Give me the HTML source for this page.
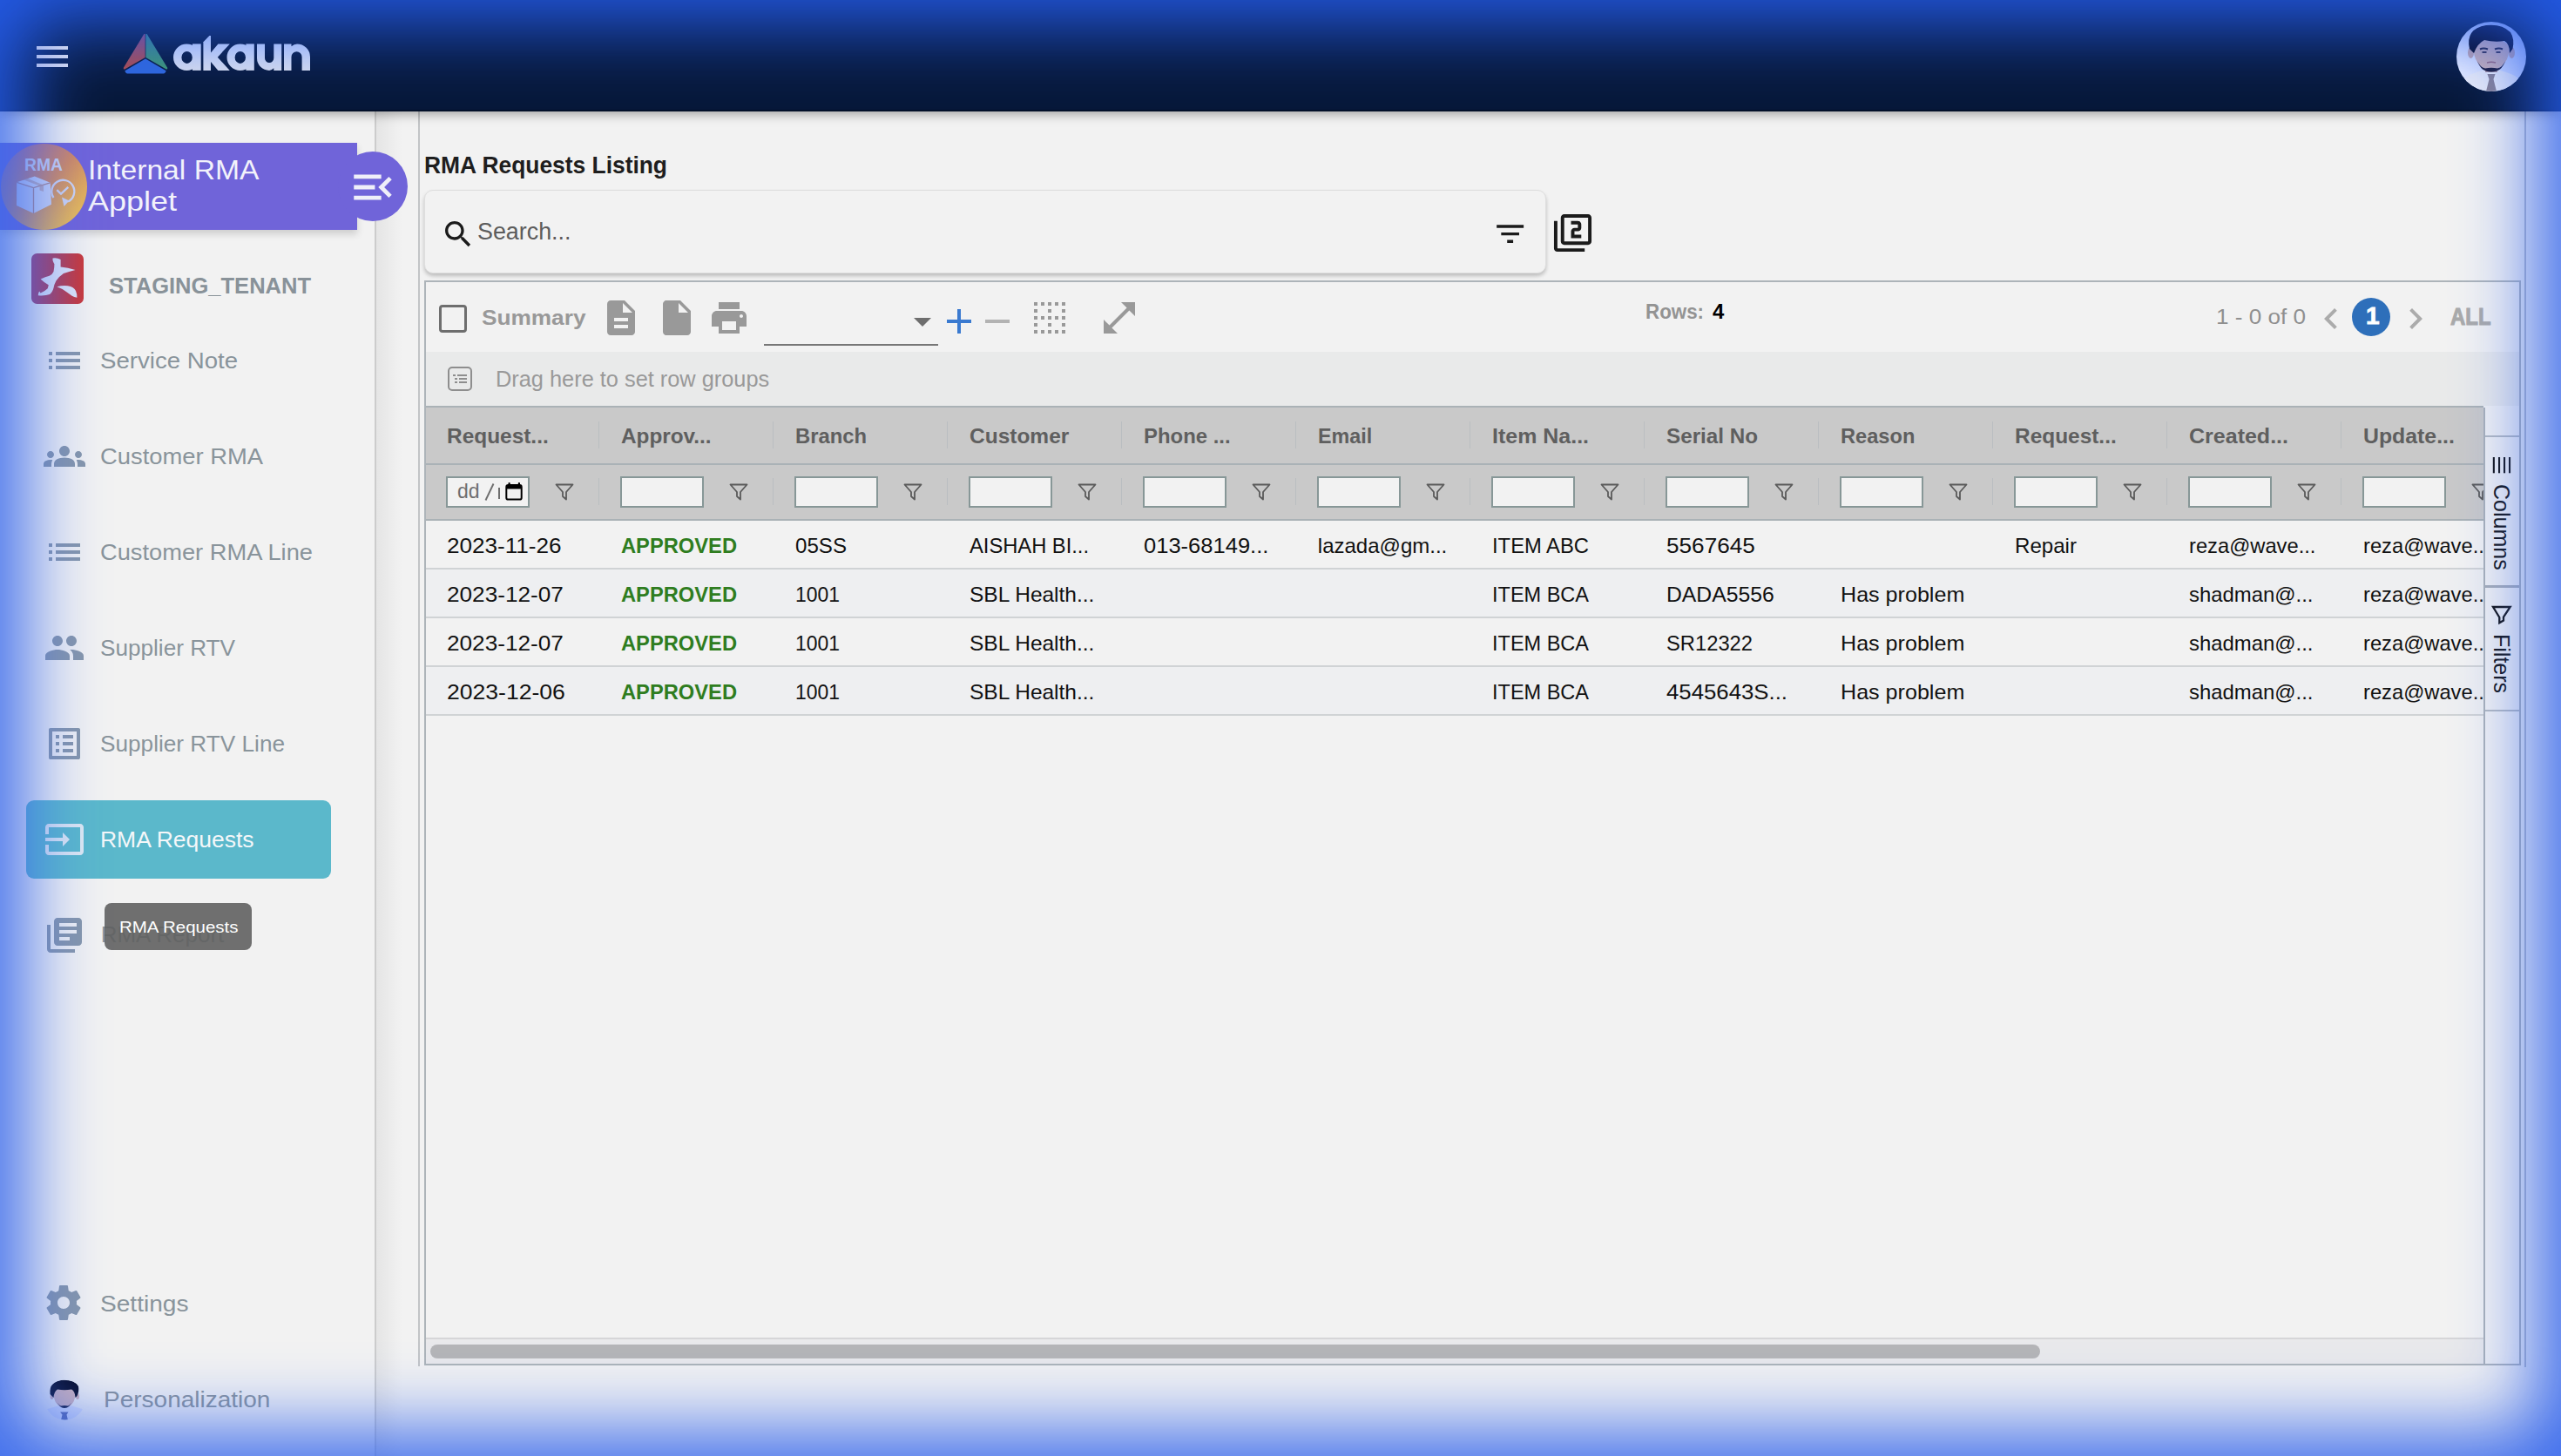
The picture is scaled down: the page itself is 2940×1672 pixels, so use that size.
<!DOCTYPE html>
<html><head><meta charset="utf-8"><title>RMA Requests</title>
<style>
html,body{margin:0;padding:0;width:2940px;height:1672px;overflow:hidden;background:#f2f2f2;font-family:"Liberation Sans",sans-serif;}
.t{position:absolute;line-height:1;white-space:nowrap;}
.ic{position:absolute;display:block;overflow:visible;}
.b{position:absolute;box-sizing:border-box;}
</style></head><body>
<div class="b" style="left:0;top:128px;width:432px;height:1544px;background:#f2f2f2;border-right:2px solid #cccccc"></div>
<div class="b" style="left:432px;top:128px;width:30px;height:1544px;background:linear-gradient(90deg,rgba(0,0,0,.055),rgba(0,0,0,0))"></div>
<div class="b" style="left:480.3px;top:128px;width:1.7px;height:1441px;background:#c2c4c6"></div>
<div class="b" style="left:2898px;top:128px;width:1.6px;height:1442px;background:#b4bac6"></div>
<div class="b" style="left:0;top:0;width:2940px;height:128px;background:#071839;box-shadow:0 3px 12px rgba(0,0,0,.35);border-bottom:2px solid #04112a;z-index:2"></div>
<div class="b" style="left:42px;top:53px;width:36px;height:4px;background:linear-gradient(90deg,#a9b9ef,#c9d2f1);z-index:60"></div><div class="b" style="left:42px;top:63px;width:36px;height:4px;background:linear-gradient(90deg,#a9b9ef,#c9d2f1);z-index:60"></div><div class="b" style="left:42px;top:73px;width:36px;height:4px;background:linear-gradient(90deg,#a9b9ef,#c9d2f1);z-index:60"></div><div style="position:absolute;left:0;top:0;z-index:3"><svg class="ic" style="left:136px;top:32px;width:230px;height:60px" viewBox="136 32 230 60">
<defs>
<linearGradient id="lr" x1="0" y1="0" x2="0" y2="1"><stop offset="0" stop-color="#934e78"/><stop offset="1" stop-color="#b24c47"/></linearGradient>
<linearGradient id="lg" x1="0" y1="0" x2="0" y2="1"><stop offset="0" stop-color="#3a8590"/><stop offset="1" stop-color="#40996e"/></linearGradient>
<linearGradient id="lt" x1="0" y1="0" x2="0" y2="1"><stop offset="0" stop-color="#d4e0ff"/><stop offset="1" stop-color="#dde1ee"/></linearGradient>
</defs>
<path d="M165.2 39.2 Q166.2 38.4 166.6 39.2 L166.6 66.0 L143.2 79.6 Q141.2 79.6 142.0 77.4 Z" fill="url(#lr)"/>
<path d="M168.8 39.2 Q167.8 38.4 167.4 39.2 L167.4 66.0 L190.8 79.6 Q192.8 79.6 192.0 77.4 Z" fill="url(#lg)"/>
<path d="M167 67.6 L190.6 81.2 Q190 84.6 186.6 84.6 L147.4 84.6 Q144 84.6 143.4 81.2 Z" fill="#3068dc"/>
<g fill="url(#lt)">
<path fill-rule="evenodd" d="M199 65.7a15.3 15.3 0 1 0 30.6 0a15.3 15.3 0 1 0 -30.6 0Z M208.4 65.9a6.2 7 0 1 0 12.4 0a6.2 7 0 1 0 -12.4 0Z"/>
<rect x="221" y="50.4" width="9.7" height="30.5"/>
<path d="M233.4 48.2 L240.4 41 L242 41 L242 80.9 L233.4 80.9 Z"/>
<path d="M242 60.5 L250.4 50.4 L263.8 50.4 L249.8 65.7 L263.8 80.9 L250.4 80.9 L242 71 Z"/>
<path fill-rule="evenodd" d="M260.5 65.7a15.3 15.3 0 1 0 30.6 0a15.3 15.3 0 1 0 -30.6 0Z M269.6 65.9a6.2 7 0 1 0 12.4 0a6.2 7 0 1 0 -12.4 0Z"/>
<rect x="282.4" y="50.4" width="9.4" height="30.5"/>
<path d="M295 50.4 H304 V66.8 A5.15 5.15 0 0 0 314.3 66.8 V50.4 H323.2 V80.9 H314.3 V78.2 Q311.5 80.9 309.1 80.9 A14.1 14.1 0 0 1 295 66.8 Z"/>
<path d="M326 80.9 V50.4 H334.5 V53.2 Q337.5 50.4 341 50.4 A15 15 0 0 1 356 65.4 V80.9 H346.6 V65.4 A6.05 6.05 0 0 0 334.5 65.4 V80.9 Z"/>
</g>
</svg><svg class="ic" style="left:2820px;top:25px;width:80px;height:80px" viewBox="0 0 80 80">
<defs><clipPath id="av"><circle cx="40" cy="40" r="40"/></clipPath>
<linearGradient id="avbg" x1="1" y1="0" x2="0" y2="1"><stop offset="0" stop-color="#b4c6ff"/><stop offset="1" stop-color="#f4f6ff"/></linearGradient>
<linearGradient id="avsk" x1="0" y1="0" x2="0" y2="1"><stop offset="0" stop-color="#c8aeb6"/><stop offset="1" stop-color="#d0b4b4"/></linearGradient></defs>
<g clip-path="url(#av)">
<rect width="80" height="80" fill="url(#avbg)"/>
<path d="M2 80 Q4 64 20 59 L32 55 L48 55 L60 59 Q76 64 78 80 Z" fill="#eceef8"/>
<path d="M33 56 L40 64 L47 56 L46 55 L34 55 Z" fill="#f6f6fc"/>
<path d="M35.5 60 L44.5 60 L42.5 66 L46 80 L34 80 L37.5 66 Z" fill="#8c8494"/>
<ellipse cx="16.5" cy="35.5" rx="3.5" ry="6.5" fill="#c2a6ae"/>
<ellipse cx="63.5" cy="35.5" rx="3.5" ry="6.5" fill="#c2a6ae"/>
<rect x="33" y="48" width="14" height="10" fill="#b89ea4"/>
<path d="M19.5 28 Q19 52 40 56 Q61 52 60.5 28 Q56 20 40 20 Q24 20 19.5 28 Z" fill="url(#avsk)"/>
<path d="M15 31 Q10 8 34 4 Q52 2 62 12 Q67 20 64.5 31 L61 36 Q61 25 55 22 Q44 24 32 21 Q24 25 20 36 Z" fill="#05071a"/>
<path d="M24 45 Q28 57.5 40 57.5 Q52 57.5 56 45 Q53 52 47 53.5 Q40 52 33 53.5 Q27 52 24 45 Z" fill="#1b1830"/>
<path d="M27 31.5 Q31 29.5 36 31.5 M44 31.5 Q49 29.5 53 31.5" stroke="#24203a" stroke-width="2" fill="none"/>
<path d="M29.5 35 h5 M45.5 35 h5" stroke="#3a3450" stroke-width="1.8"/>
<path d="M35 47 Q40 45.5 45 47" stroke="#9a6a7a" stroke-width="1.4" fill="none"/>
</g></svg></div>
<div class="b" style="left:0;top:164px;width:410px;height:100px;background:#7064d9;box-shadow:0 5px 8px rgba(0,0,0,.15)"></div>
<div class="b" style="left:388px;top:174px;width:80px;height:80px;border-radius:50%;background:#7064d9"></div>
<svg class="ic" style="left:399.00px;top:186.00px;width:58px;height:58px;" viewBox="0 0 24 24"><path fill="#efeff9" d="M3 18h13v-2H3v2zm0-5h10v-2H3v2zm0-7v2h13V6H3zm18 9.59L17.42 12 21 8.41 19.59 7l-5 5 5 5L21 15.59z"/></svg>
<svg class="ic" style="left:1px;top:165px;width:99px;height:99px" viewBox="0 0 99 99">
<defs><linearGradient id="rg" x1="0" y1="0.15" x2="0.85" y2="1"><stop offset="0" stop-color="#a86c9c"/><stop offset=".5" stop-color="#d28a62"/><stop offset="1" stop-color="#eec454"/></linearGradient></defs>
<circle cx="49.5" cy="49.5" r="49.5" fill="url(#rg)"/>
<text x="49" y="31.2" font-family="Liberation Sans" font-weight="bold" font-size="19.5" fill="#cfd6f4" text-anchor="middle" textLength="44" lengthAdjust="spacingAndGlyphs">RMA</text>
<path d="M18.2 44.3 L38.8 37.6 L56.7 44.8 L37.5 50.5 Z" fill="#d3dbf6"/>
<path d="M18.2 44.3 L37.5 50.5 L37.5 80 L18 71 Z" fill="#c7d1f3"/>
<path d="M37.5 50.5 L56.7 44.8 L58 69.7 L37.5 80 Z" fill="#d0d8f5"/>
<path d="M18.2 44.3 L37.5 50.5 L56.7 44.8 M37.5 50.5 V80" stroke="#b08a8e" stroke-width="1.3" fill="none"/>
<path d="M30 39.8 L49 47.4 L49 55 L44.5 53.5 L44.5 48.6 L25.6 41.2 Z" fill="#b89494" opacity=".6"/>
<path d="M60.5 62 A13 13 0 1 1 77 66.5" stroke="#cfd6f4" stroke-width="2.3" fill="none"/>
<path d="M70 61.5 L78.5 65.5 L72.5 72 Z" fill="#cfd6f4"/>
<path d="M64.3 53.2 L69 57.6 L77.3 49.8" stroke="#cfd6f4" stroke-width="2.4" fill="none"/>
</svg>
<div class="t" style="left:101.40px;top:180.18px;font-size:31.8px;color:#f2f2fb;transform:scale(1.0590,1.0000);transform-origin:0 0;">Internal RMA</div>
<div class="t" style="left:101.40px;top:215.98px;font-size:31.8px;color:#f2f2fb;transform:scale(1.1314,1.0000);transform-origin:0 0;">Applet</div>
<svg class="ic" style="left:36px;top:291px;width:60px;height:58px" viewBox="0 0 60 58">
<defs><linearGradient id="tg" x1="0" y1="0" x2="1" y2="0"><stop offset="0" stop-color="#a04070"/><stop offset=".45" stop-color="#ac3e5a"/><stop offset="1" stop-color="#cc3838"/></linearGradient></defs>
<rect width="60" height="58" rx="6.5" fill="url(#tg)"/>
<path d="M24.5 5.5 Q29 4.5 33.6 7 L33.6 15.5 Q42 16 50.5 19 Q43 21 37 23 Q31 27 28.4 31.5 Q26 36 25.5 39.7 Q24 45 21 47 Q16 49 7.7 48.3 Q8 45 9.1 43.5 L10.6 45.4 Q16 43 18.7 40.2 Q19.5 38 19.7 36.3 Q14 33 10.6 29.6 Q16 26.5 20.7 25.7 Q24.5 23.5 25.5 20.9 Q26.5 16 26.4 12.3 Q25 10 24.5 8 Z" fill="#dfe5f8"/>
<path d="M29.3 38.2 Q36 36.5 41.8 37.3 Q49 38.5 51 43 Q53 48 52.4 50.7 Q49 50.5 46.6 48.8 Q40 44 35.6 41.1 Q32 39 29.3 38.2 Z" fill="#dfe5f8"/>
</svg>
<div class="t" style="left:125.00px;top:315.09px;font-size:26px;color:#899299;font-weight:bold;transform:scale(0.9813,1.0000);transform-origin:0 0;">STAGING_TENANT</div>
<svg class="ic" style="left:50.00px;top:389.90px;width:48px;height:48px;" viewBox="0 0 24 24"><path fill="#8797aa" d="M3 13h2v-2H3v2zm0 4h2v-2H3v2zm0-8h2V7H3v2zm4 4h14v-2H7v2zm0 4h14v-2H7v2zM7 7v2h14V7H7z"/></svg>
<div class="t" style="left:115.10px;top:400.89px;font-size:26px;color:#89949b;transform:scale(1.0615,1.0000);transform-origin:0 0;">Service Note</div>
<svg class="ic" style="left:50.00px;top:500.40px;width:48px;height:48px;" viewBox="0 0 24 24"><path fill="#8797aa" d="M12 12.75c1.63 0 3.07.39 4.24.9 1.08.48 1.76 1.56 1.76 2.73V18H6v-1.61c0-1.18.68-2.26 1.76-2.73 1.17-.52 2.61-.91 4.24-.91zM4 13c1.1 0 2-.9 2-2s-.9-2-2-2-2 .9-2 2 .9 2 2 2zm1.13 1.1c-.37-.06-.74-.1-1.13-.1-.99 0-1.93.21-2.78.58C.48 14.9 0 15.62 0 16.43V18h4.5v-1.61c0-.83.23-1.61.63-2.29zM20 13c1.1 0 2-.9 2-2s-.9-2-2-2-2 .9-2 2 .9 2 2 2zm4 3.43c0-.81-.48-1.53-1.22-1.85-.85-.37-1.79-.58-2.78-.58-.39 0-.76.04-1.13.1.4.68.63 1.46.63 2.29V18H24v-1.57zM12 6c1.66 0 3 1.34 3 3s-1.34 3-3 3-3-1.34-3-3 1.34-3 3-3z"/></svg>
<div class="t" style="left:115.10px;top:511.39px;font-size:26px;color:#89949b;transform:scale(1.0523,1.0000);transform-origin:0 0;">Customer RMA</div>
<svg class="ic" style="left:50.00px;top:610.40px;width:48px;height:48px;" viewBox="0 0 24 24"><path fill="#8797aa" d="M3 13h2v-2H3v2zm0 4h2v-2H3v2zm0-8h2V7H3v2zm4 4h14v-2H7v2zm0 4h14v-2H7v2zM7 7v2h14V7H7z"/></svg>
<div class="t" style="left:115.10px;top:621.39px;font-size:26px;color:#89949b;transform:scale(1.0488,1.0000);transform-origin:0 0;">Customer RMA Line</div>
<svg class="ic" style="left:50.00px;top:720.20px;width:48px;height:48px;" viewBox="0 0 24 24"><path fill="#8797aa" d="M16 11c1.66 0 2.99-1.34 2.99-3S17.66 5 16 5c-1.66 0-3 1.34-3 3s1.34 3 3 3zm-8 0c1.66 0 2.99-1.34 2.99-3S9.66 5 8 5C6.34 5 5 6.34 5 8s1.34 3 3 3zm0 2c-2.33 0-7 1.17-7 3.5V19h14v-2.5c0-2.33-4.67-3.5-7-3.5zm8 0c-.29 0-.62.02-.97.05 1.16.84 1.97 1.97 1.97 3.45V19h6v-2.5c0-2.33-4.67-3.5-7-3.5z"/></svg>
<div class="t" style="left:115.10px;top:731.19px;font-size:26px;color:#89949b;transform:scale(1.0055,1.0000);transform-origin:0 0;">Supplier RTV</div>
<svg class="ic" style="left:50.00px;top:830.20px;width:48px;height:48px;" viewBox="0 0 24 24"><path fill="#8797aa" d="M19 5v14H5V5h14m1.1-2H3.9c-.5 0-.9.4-.9.9v16.2c0 .4.4.9.9.9h16.2c.4 0 .9-.5.9-.9V3.9c0-.5-.5-.9-.9-.9zM11 7h6v2h-6V7zm0 4h6v2h-6v-2zm0 4h6v2h-6zM7 7h2v2H7zm0 4h2v2H7zm0 4h2v2H7z"/></svg>
<div class="t" style="left:115.10px;top:841.19px;font-size:26px;color:#89949b;transform:scale(1.0070,1.0000);transform-origin:0 0;">Supplier RTV Line</div>
<div class="b" style="left:30px;top:919px;width:350px;height:90px;border-radius:9px;background:#5bb8cb"></div>
<svg class="ic" style="left:50.00px;top:940.00px;width:48px;height:48px;" viewBox="0 0 24 24"><path fill="#dfe9f2" d="M21 3.01H3c-1.1 0-2 .9-2 2V9h2V4.99h18v14.03H3V15H1v4.01c0 1.1.9 1.98 2 1.98h18c1.1 0 2-.88 2-1.98v-14c0-1.11-.9-2-2-2zM11 16l4-4-4-4v3H1v2h10v3z"/></svg>
<div class="t" style="left:115.00px;top:951.49px;font-size:26px;color:#f4f7f9;transform:scale(1.0185,1.0000);transform-origin:0 0;">RMA Requests</div>
<svg class="ic" style="left:50.00px;top:1050.00px;width:48px;height:48px;" viewBox="0 0 24 24"><path fill="#8797aa" d="M4 6H2v14c0 1.1.9 2 2 2h14v-2H4V6zm16-4H8c-1.1 0-2 .9-2 2v12c0 1.1.9 2 2 2h12c1.1 0 2-.9 2-2V4c0-1.1-.9-2-2-2zm-1 9H9V9h10v2zm-4 4H9v-2h6v2zm4-8H9V5h10v2z"/></svg>
<div class="t" style="left:115.70px;top:1060.49px;font-size:26px;color:#89949b;">RMA Report</div>
<div class="b" style="left:120px;top:1037px;width:169px;height:54px;border-radius:8px;background:rgba(97,97,97,.9)"></div>
<div class="t" style="left:136.50px;top:1054.75px;font-size:19.2px;color:#ffffff;transform:scale(1.0660,1.0000);transform-origin:0 0;">RMA Requests</div>
<svg class="ic" style="left:49.00px;top:1472.00px;width:48px;height:48px;" viewBox="0 0 24 24"><path fill="#8797aa" d="M19.43 12.98c.04-.32.07-.64.07-.98s-.03-.66-.07-.98l2.11-1.65c.19-.15.24-.42.12-.64l-2-3.46c-.12-.22-.39-.3-.61-.22l-2.49 1c-.52-.4-1.08-.73-1.69-.98l-.38-2.65C14.46 2.18 14.25 2 14 2h-4c-.25 0-.46.18-.49.42l-.38 2.65c-.61.25-1.17.59-1.69.98l-2.49-1c-.23-.09-.49 0-.61.22l-2 3.46c-.13.22-.07.49.12.64l2.11 1.65c-.04.32-.07.65-.07.98s.03.66.07.98l-2.11 1.65c-.19.15-.24.42-.12.64l2 3.46c.12.22.39.3.61.22l2.49-1c.52.4 1.08.73 1.69.98l.38 2.65c.03.24.24.42.49.42h4c.25 0 .46-.18.49-.42l.38-2.65c.61-.25 1.17-.59 1.69-.98l2.49 1c.23.09.49 0 .61-.22l2-3.46c.12-.22.07-.49-.12-.64l-2.11-1.65zM12 15.5c-1.93 0-3.5-1.57-3.5-3.5s1.57-3.5 3.5-3.5 3.5 1.57 3.5 3.5-1.57 3.5-3.5 3.5z"/></svg>
<div class="t" style="left:114.60px;top:1483.57px;font-size:26.5px;color:#89949b;transform:scale(1.0591,1.0000);transform-origin:0 0;">Settings</div>
<svg class="ic" style="left:53px;top:1584px;width:43px;height:47px" viewBox="0 0 43 47">
<defs><clipPath id="pa"><circle cx="21.5" cy="23.5" r="23"/></clipPath></defs>
<g clip-path="url(#pa)">
<path d="M0 34.5 L13 30.5 L30 30.5 L43 34.5 L43 47 L0 47 Z" fill="#dde2f8"/>
<path d="M16 37.5 L25.5 37.5 L23.5 40.5 L25 47 L17 47 L18.5 40.5 Z" fill="#5a68a8"/>
<ellipse cx="6.5" cy="19.5" rx="2" ry="3.5" fill="#d0b2b6"/>
<ellipse cx="36" cy="19.5" rx="2" ry="3.5" fill="#d0b2b6"/>
<path d="M8.5 15 Q8.5 31 21 32.5 Q33.5 31 33.5 15 Q31 10 21 10 Q11 10 8.5 15 Z" fill="#d6b6b8"/>
<path d="M4.5 17 Q3 2 19 0.8 Q33 0.5 37 8 Q38 14 35.5 19 L33.5 21 Q33 13 29 11.5 Q21 13 13 11.5 Q9 14 8.5 21 Z" fill="#03061c"/>
<path d="M12 24.5 Q15 33 21 33 Q27 33 30 24.5 Q28 29.5 25 30.5 Q21 29.5 17 30.5 Q14 29.5 12 24.5 Z" fill="#0a1030"/>
</g></svg>
<div class="t" style="left:118.60px;top:1593.57px;font-size:26.5px;color:#89949b;transform:scale(1.0564,1.0000);transform-origin:0 0;">Personalization</div>
<div class="t" style="left:487.20px;top:176.54px;font-size:27px;color:#1e1e1e;font-weight:bold;transform:scale(0.9771,1.0000);transform-origin:0 0;">RMA Requests Listing</div>
<div class="b" style="left:487px;top:218px;width:1288px;height:96px;border-radius:10px;background:#f2f2f2;border:1px solid #dedede;box-shadow:0 3px 4px rgba(0,0,0,.22)"></div>
<svg class="ic" style="left:505.60px;top:249.00px;width:40px;height:40px;" viewBox="0 0 24 24"><path fill="#1b1b1b" d="M15.5 14h-.79l-.28-.27C15.41 12.59 16 11.11 16 9.5 16 5.91 13.09 3 9.5 3S3 5.91 3 9.5 5.91 16 9.5 16c1.61 0 3.09-.59 4.23-1.57l.27.28v.79l5 4.99L20.49 19l-4.99-5zm-6 0C7.01 14 5 11.99 5 9.5S7.01 5 9.5 5 14 7.01 14 9.5 11.99 14 9.5 14z"/></svg>
<div class="t" style="left:547.50px;top:253.39px;font-size:27px;color:#5c5c5c;transform:scale(0.9949,1.0000);transform-origin:0 0;">Search...</div>
<svg class="ic" style="left:1712.80px;top:247.70px;width:41.3px;height:41.3px;" viewBox="0 0 24 24"><path fill="#1b1b1b" d="M10 18h4v-2h-4v2zM3 6v2h18V6H3zm3 7h12v-2H6v2z"/></svg>
<svg class="ic" style="left:1782.00px;top:244.00px;width:47px;height:47px;" viewBox="0 0 24 24"><path fill="#1b1b1b" d="M3 5H1v16c0 1.1.9 2 2 2h16v-2H3V5zm18-4H7c-1.1 0-2 .9-2 2v14c0 1.1.9 2 2 2h14c1.1 0 2-.9 2-2V3c0-1.1-.9-2-2-2zm0 16H7V3h14v14zm-4-4h-4v-2h2c1.1 0 2-.89 2-2V7c0-1.11-.9-2-2-2h-4v2h4v2h-2c-1.1 0-2 .89-2 2v4h6v-2z"/></svg>
<div class="b" style="left:487px;top:322px;width:2407px;height:1246px;border:2px solid #adb4b9;background:#f2f2f2"></div>
<div class="b" style="left:504px;top:350px;width:32px;height:32px;border:3.2px solid #6e6e6e;border-radius:4px"></div>
<div class="t" style="left:553.20px;top:353.46px;font-size:24.5px;color:#999999;font-weight:bold;transform:scale(1.0701,1.0000);transform-origin:0 0;">Summary</div>
<svg class="ic" style="left:689.00px;top:341.00px;width:48px;height:48px;" viewBox="0 0 24 24"><path fill="#999999" d="M14 2H6c-1.1 0-1.99.9-1.99 2L4 20c0 1.1.89 2 1.99 2H18c1.1 0 2-.9 2-2V8l-6-6zm2 16H8v-2h8v2zm0-4H8v-2h8v2zm-3-5V3.5L18.5 9H13z"/></svg>
<svg class="ic" style="left:753.00px;top:341.00px;width:48px;height:48px;" viewBox="0 0 24 24"><path fill="#999999" d="M6 2c-1.1 0-1.99.9-1.99 2L4 20c0 1.1.89 2 1.99 2H18c1.1 0 2-.9 2-2V8l-6-6H6zm7 7V3.5L18.5 9H13z"/></svg>
<svg class="ic" style="left:813.00px;top:341.00px;width:48px;height:48px;" viewBox="0 0 24 24"><path fill="#999999" d="M19 8H5c-1.66 0-3 1.34-3 3v6h4v4h12v-4h4v-6c0-1.66-1.34-3-3-3zm-3 11H8v-5h8v5zm3-7c-.55 0-1-.45-1-1s.45-1 1-1 1 .45 1 1-.45 1-1 1zm-1-9H6v4h12V3z"/></svg>
<div class="b" style="left:877px;top:395px;width:200px;height:2px;background:#777"></div>
<svg class="ic" style="left:1049px;top:364.6px;width:20px;height:10.2px" viewBox="0 0 20 10"><path d="M0 0H20L10 10Z" fill="#6e6e6e"/></svg>
<svg class="ic" style="left:1077.00px;top:345.00px;width:48px;height:48px;" viewBox="0 0 24 24"><path fill="#3a7ad0" d="M19 13h-6v6h-2v-6H5v-2h6V5h2v6h6v2z"/></svg>
<svg class="ic" style="left:1121.00px;top:345.00px;width:48px;height:48px;" viewBox="0 0 24 24"><path fill="#b3b3b3" d="M19 13H5v-2h14v2z"/></svg>
<svg class="ic" style="left:1181.00px;top:341.00px;width:48px;height:48px;" viewBox="0 0 24 24"><path fill="#999999" d="M7 5h2V3H7v2zm0 8h2v-2H7v2zm0 8h2v-2H7v2zm4-4h2v-2h-2v2zm0 4h2v-2h-2v2zm-8 0h2v-2H3v2zm0-4h2v-2H3v2zm0-4h2v-2H3v2zm0-4h2V7H3v2zm0-4h2V3H3v2zm8 8h2v-2h-2v2zm8 4h2v-2h-2v2zm0-4h2v-2h-2v2zm0 8h2v-2h-2v2zm0-12h2V7h-2v2zm-8 0h2V7h-2v2zm8-6v2h2V3h-2zm-8 2h2V3h-2v2zm4 16h2v-2h-2v2zm0-8h2v-2h-2v2zm0-8h2V3h-2v2z"/></svg>
<svg class="ic" style="left:1261.00px;top:341.00px;width:48px;height:48px;" viewBox="0 0 24 24"><path fill="#999999" d="M21 11V3h-8l3.29 3.29-10 10L3 13v8h8l-3.29-3.29 10-10z"/></svg>
<div class="t" style="left:1889.00px;top:346.98px;font-size:22.3px;color:#939393;font-weight:bold;transform:scale(1.0015,1.0500);transform-origin:0 0;">Rows:</div>
<div class="t" style="left:1965.70px;top:346.91px;font-size:23.5px;color:#000;font-weight:bold;transform:scale(1.0179,1.0000);transform-origin:0 0;">4</div>
<div class="t" style="left:2543.70px;top:352.09px;font-size:24.7px;color:#8f8f8f;transform:scale(1.0586,1.0000);transform-origin:0 0;">1 - 0 of 0</div>
<svg class="ic" style="left:2652.00px;top:342.00px;width:48px;height:48px;" viewBox="0 0 24 24"><path fill="#ababab" d="M15.41 7.41L14 6l-6 6 6 6 1.41-1.41L10.83 12z"/></svg>
<div class="b" style="left:2700px;top:342px;width:44px;height:44px;border-radius:50%;background:#2e6fba"></div>
<div class="t" style="left:2716.00px;top:349.30px;font-size:28px;color:#fff;font-weight:bold;-webkit-text-stroke:0.8px #fff;">1</div>
<svg class="ic" style="left:2749.00px;top:342.00px;width:48px;height:48px;" viewBox="0 0 24 24"><path fill="#ababab" d="M10 6L8.59 7.41 13.17 12l-4.58 4.59L10 18l6-6z"/></svg>
<div class="t" style="left:2812.90px;top:349.64px;font-size:24px;color:#aaaaaa;font-weight:bold;transform:scale(0.9967,1.1500);transform-origin:0 0;-webkit-text-stroke:0.9px #aaaaaa;">ALL</div>
<div class="b" style="left:489px;top:404px;width:2403px;height:62px;background:#e9eaea"></div>
<svg class="ic" style="left:514px;top:421px;width:28px;height:28px" viewBox="0 0 28 28">
<rect x="1" y="1" width="26" height="26" rx="4" fill="none" stroke="#8e8e8e" stroke-width="2"/>
<rect x="6" y="9" width="3" height="2" fill="#8e8e8e"/><rect x="11" y="9" width="11" height="2" fill="#8e8e8e"/>
<rect x="8" y="13" width="3" height="2" fill="#8e8e8e"/><rect x="13" y="13" width="9" height="2" fill="#8e8e8e"/>
<rect x="8" y="17" width="3" height="2" fill="#8e8e8e"/><rect x="13" y="17" width="9" height="2" fill="#8e8e8e"/>
</svg>
<div class="t" style="left:568.80px;top:423.24px;font-size:25px;color:#999999;transform:scale(1.0140,1.0000);transform-origin:0 0;">Drag here to set row groups</div>
<div class="b" style="left:489px;top:466px;width:2362px;height:132px;background:#c9c9c9;border-top:2px solid #aab2b6;border-bottom:2px solid #aab2b6"></div>
<div class="b" style="left:489px;top:532px;width:2362px;height:2px;background:#aab2b6"></div>
<div style="position:absolute;left:489px;top:466px;width:2362px;height:1070px;overflow:hidden">
<div class="b" style="left:0;top:132px;width:2362px;height:56px;background:#f2f2f2;border-bottom:2px solid #d0d3d5"></div>
<div class="b" style="left:0;top:188px;width:2362px;height:56px;background:#eeeff1;border-bottom:2px solid #d0d3d5"></div>
<div class="b" style="left:0;top:244px;width:2362px;height:56px;background:#f2f2f2;border-bottom:2px solid #d0d3d5"></div>
<div class="b" style="left:0;top:300px;width:2362px;height:56px;background:#eeeff1;border-bottom:2px solid #d0d3d5"></div>
<div class="t" style="left:23.80px;top:22.88px;font-size:24px;color:#5f5f5f;font-weight:bold;transform:scale(1.0175,1.0000);transform-origin:0 0;">Request...</div>
<div class="b" style="left:23px;top:81px;width:96px;height:36px;border:2px solid #879797;background:#f2f2f2"></div><svg class="ic" style="left:148.00px;top:88.50px;width:22px;height:20px" viewBox="0 0 22 20"><path d="M1.5 1.5H20.5L13 10V18.5L9 15V10Z" fill="none" stroke="#5a5a5a" stroke-width="1.8" stroke-linejoin="round"/></svg>
<div class="t" style="left:23.80px;top:149.08px;font-size:24px;color:#111111;transform:scale(1.0877,1.0000);transform-origin:0 0;">2023-11-26</div>
<div class="t" style="left:23.80px;top:205.08px;font-size:24px;color:#111111;transform:scale(1.0899,1.0000);transform-origin:0 0;">2023-12-07</div>
<div class="t" style="left:23.80px;top:261.08px;font-size:24px;color:#111111;transform:scale(1.0899,1.0000);transform-origin:0 0;">2023-12-07</div>
<div class="t" style="left:23.80px;top:317.08px;font-size:24px;color:#111111;transform:scale(1.1062,1.0000);transform-origin:0 0;">2023-12-06</div>
<div class="t" style="left:223.80px;top:22.88px;font-size:24px;color:#5f5f5f;font-weight:bold;transform:scale(1.0135,1.0000);transform-origin:0 0;">Approv...</div>
<div class="b" style="left:197.5px;top:18px;width:1.6px;height:31px;background:#babec1"></div><div class="b" style="left:197.5px;top:83px;width:1.6px;height:31px;background:#babec1"></div><div class="b" style="left:223px;top:81px;width:96px;height:36px;border:2px solid #879797;background:#f2f2f2"></div><svg class="ic" style="left:348.00px;top:88.50px;width:22px;height:20px" viewBox="0 0 22 20"><path d="M1.5 1.5H20.5L13 10V18.5L9 15V10Z" fill="none" stroke="#5a5a5a" stroke-width="1.8" stroke-linejoin="round"/></svg>
<div class="t" style="left:224.20px;top:149.08px;font-size:24px;color:#2f7d1f;font-weight:bold;transform:scale(0.9875,1.0000);transform-origin:0 0;">APPROVED</div>
<div class="t" style="left:224.20px;top:205.08px;font-size:24px;color:#2f7d1f;font-weight:bold;transform:scale(0.9875,1.0000);transform-origin:0 0;">APPROVED</div>
<div class="t" style="left:224.20px;top:261.08px;font-size:24px;color:#2f7d1f;font-weight:bold;transform:scale(0.9875,1.0000);transform-origin:0 0;">APPROVED</div>
<div class="t" style="left:224.20px;top:317.08px;font-size:24px;color:#2f7d1f;font-weight:bold;transform:scale(0.9875,1.0000);transform-origin:0 0;">APPROVED</div>
<div class="t" style="left:423.80px;top:22.88px;font-size:24px;color:#5f5f5f;font-weight:bold;transform:scale(0.9918,1.0000);transform-origin:0 0;">Branch</div>
<div class="b" style="left:397.5px;top:18px;width:1.6px;height:31px;background:#babec1"></div><div class="b" style="left:397.5px;top:83px;width:1.6px;height:31px;background:#babec1"></div><div class="b" style="left:423px;top:81px;width:96px;height:36px;border:2px solid #879797;background:#f2f2f2"></div><svg class="ic" style="left:548.00px;top:88.50px;width:22px;height:20px" viewBox="0 0 22 20"><path d="M1.5 1.5H20.5L13 10V18.5L9 15V10Z" fill="none" stroke="#5a5a5a" stroke-width="1.8" stroke-linejoin="round"/></svg>
<div class="t" style="left:423.80px;top:149.08px;font-size:24px;color:#111111;transform:scale(1.0050,1.0000);transform-origin:0 0;">05SS</div>
<div class="t" style="left:423.80px;top:205.08px;font-size:24px;color:#111111;transform:scale(0.9551,1.0000);transform-origin:0 0;">1001</div>
<div class="t" style="left:423.80px;top:261.08px;font-size:24px;color:#111111;transform:scale(0.9551,1.0000);transform-origin:0 0;">1001</div>
<div class="t" style="left:423.80px;top:317.08px;font-size:24px;color:#111111;transform:scale(0.9551,1.0000);transform-origin:0 0;">1001</div>
<div class="t" style="left:623.80px;top:22.88px;font-size:24px;color:#5f5f5f;font-weight:bold;transform:scale(1.0202,1.0000);transform-origin:0 0;">Customer</div>
<div class="b" style="left:597.5px;top:18px;width:1.6px;height:31px;background:#babec1"></div><div class="b" style="left:597.5px;top:83px;width:1.6px;height:31px;background:#babec1"></div><div class="b" style="left:623px;top:81px;width:96px;height:36px;border:2px solid #879797;background:#f2f2f2"></div><svg class="ic" style="left:748.00px;top:88.50px;width:22px;height:20px" viewBox="0 0 22 20"><path d="M1.5 1.5H20.5L13 10V18.5L9 15V10Z" fill="none" stroke="#5a5a5a" stroke-width="1.8" stroke-linejoin="round"/></svg>
<div class="t" style="left:623.80px;top:149.08px;font-size:24px;color:#111111;transform:scale(0.9878,1.0000);transform-origin:0 0;">AISHAH BI...</div>
<div class="t" style="left:623.80px;top:205.08px;font-size:24px;color:#111111;transform:scale(1.0205,1.0000);transform-origin:0 0;">SBL Health...</div>
<div class="t" style="left:623.80px;top:261.08px;font-size:24px;color:#111111;transform:scale(1.0205,1.0000);transform-origin:0 0;">SBL Health...</div>
<div class="t" style="left:623.80px;top:317.08px;font-size:24px;color:#111111;transform:scale(1.0205,1.0000);transform-origin:0 0;">SBL Health...</div>
<div class="t" style="left:823.80px;top:22.88px;font-size:24px;color:#5f5f5f;font-weight:bold;transform:scale(0.9959,1.0000);transform-origin:0 0;">Phone ...</div>
<div class="b" style="left:797.5px;top:18px;width:1.6px;height:31px;background:#babec1"></div><div class="b" style="left:797.5px;top:83px;width:1.6px;height:31px;background:#babec1"></div><div class="b" style="left:823px;top:81px;width:96px;height:36px;border:2px solid #879797;background:#f2f2f2"></div><svg class="ic" style="left:948.00px;top:88.50px;width:22px;height:20px" viewBox="0 0 22 20"><path d="M1.5 1.5H20.5L13 10V18.5L9 15V10Z" fill="none" stroke="#5a5a5a" stroke-width="1.8" stroke-linejoin="round"/></svg>
<div class="t" style="left:823.80px;top:149.08px;font-size:24px;color:#111111;transform:scale(1.0639,1.0000);transform-origin:0 0;">013-68149...</div>
<div class="t" style="left:1023.80px;top:22.88px;font-size:24px;color:#5f5f5f;font-weight:bold;transform:scale(0.9698,1.0000);transform-origin:0 0;">Email</div>
<div class="b" style="left:997.5px;top:18px;width:1.6px;height:31px;background:#babec1"></div><div class="b" style="left:997.5px;top:83px;width:1.6px;height:31px;background:#babec1"></div><div class="b" style="left:1023px;top:81px;width:96px;height:36px;border:2px solid #879797;background:#f2f2f2"></div><svg class="ic" style="left:1148.00px;top:88.50px;width:22px;height:20px" viewBox="0 0 22 20"><path d="M1.5 1.5H20.5L13 10V18.5L9 15V10Z" fill="none" stroke="#5a5a5a" stroke-width="1.8" stroke-linejoin="round"/></svg>
<div class="t" style="left:1023.80px;top:149.08px;font-size:24px;color:#111111;">lazada@gm...</div>
<div class="t" style="left:1223.80px;top:22.88px;font-size:24px;color:#5f5f5f;font-weight:bold;transform:scale(1.0403,1.0000);transform-origin:0 0;">Item Na...</div>
<div class="b" style="left:1197.5px;top:18px;width:1.6px;height:31px;background:#babec1"></div><div class="b" style="left:1197.5px;top:83px;width:1.6px;height:31px;background:#babec1"></div><div class="b" style="left:1223px;top:81px;width:96px;height:36px;border:2px solid #879797;background:#f2f2f2"></div><svg class="ic" style="left:1348.00px;top:88.50px;width:22px;height:20px" viewBox="0 0 22 20"><path d="M1.5 1.5H20.5L13 10V18.5L9 15V10Z" fill="none" stroke="#5a5a5a" stroke-width="1.8" stroke-linejoin="round"/></svg>
<div class="t" style="left:1223.80px;top:149.08px;font-size:24px;color:#111111;transform:scale(0.9908,1.0000);transform-origin:0 0;">ITEM ABC</div>
<div class="t" style="left:1223.80px;top:205.08px;font-size:24px;color:#111111;transform:scale(0.9793,1.0000);transform-origin:0 0;">ITEM BCA</div>
<div class="t" style="left:1223.80px;top:261.08px;font-size:24px;color:#111111;transform:scale(0.9793,1.0000);transform-origin:0 0;">ITEM BCA</div>
<div class="t" style="left:1223.80px;top:317.08px;font-size:24px;color:#111111;transform:scale(0.9793,1.0000);transform-origin:0 0;">ITEM BCA</div>
<div class="t" style="left:1423.80px;top:22.88px;font-size:24px;color:#5f5f5f;font-weight:bold;transform:scale(1.0092,1.0000);transform-origin:0 0;">Serial No</div>
<div class="b" style="left:1397.5px;top:18px;width:1.6px;height:31px;background:#babec1"></div><div class="b" style="left:1397.5px;top:83px;width:1.6px;height:31px;background:#babec1"></div><div class="b" style="left:1423px;top:81px;width:96px;height:36px;border:2px solid #879797;background:#f2f2f2"></div><svg class="ic" style="left:1548.00px;top:88.50px;width:22px;height:20px" viewBox="0 0 22 20"><path d="M1.5 1.5H20.5L13 10V18.5L9 15V10Z" fill="none" stroke="#5a5a5a" stroke-width="1.8" stroke-linejoin="round"/></svg>
<div class="t" style="left:1423.80px;top:149.08px;font-size:24px;color:#111111;transform:scale(1.0896,1.0000);transform-origin:0 0;">5567645</div>
<div class="t" style="left:1423.80px;top:205.08px;font-size:24px;color:#111111;transform:scale(1.0310,1.0000);transform-origin:0 0;">DADA5556</div>
<div class="t" style="left:1423.80px;top:261.08px;font-size:24px;color:#111111;transform:scale(0.9892,1.0000);transform-origin:0 0;">SR12322</div>
<div class="t" style="left:1423.80px;top:317.08px;font-size:24px;color:#111111;transform:scale(1.0737,1.0000);transform-origin:0 0;">4545643S...</div>
<div class="t" style="left:1623.80px;top:22.88px;font-size:24px;color:#5f5f5f;font-weight:bold;transform:scale(0.9840,1.0000);transform-origin:0 0;">Reason</div>
<div class="b" style="left:1597.5px;top:18px;width:1.6px;height:31px;background:#babec1"></div><div class="b" style="left:1597.5px;top:83px;width:1.6px;height:31px;background:#babec1"></div><div class="b" style="left:1623px;top:81px;width:96px;height:36px;border:2px solid #879797;background:#f2f2f2"></div><svg class="ic" style="left:1748.00px;top:88.50px;width:22px;height:20px" viewBox="0 0 22 20"><path d="M1.5 1.5H20.5L13 10V18.5L9 15V10Z" fill="none" stroke="#5a5a5a" stroke-width="1.8" stroke-linejoin="round"/></svg>
<div class="t" style="left:1623.80px;top:205.08px;font-size:24px;color:#111111;transform:scale(1.0459,1.0000);transform-origin:0 0;">Has problem</div>
<div class="t" style="left:1623.80px;top:261.08px;font-size:24px;color:#111111;transform:scale(1.0459,1.0000);transform-origin:0 0;">Has problem</div>
<div class="t" style="left:1623.80px;top:317.08px;font-size:24px;color:#111111;transform:scale(1.0459,1.0000);transform-origin:0 0;">Has problem</div>
<div class="t" style="left:1823.80px;top:22.88px;font-size:24px;color:#5f5f5f;font-weight:bold;transform:scale(1.0175,1.0000);transform-origin:0 0;">Request...</div>
<div class="b" style="left:1797.5px;top:18px;width:1.6px;height:31px;background:#babec1"></div><div class="b" style="left:1797.5px;top:83px;width:1.6px;height:31px;background:#babec1"></div><div class="b" style="left:1823px;top:81px;width:96px;height:36px;border:2px solid #879797;background:#f2f2f2"></div><svg class="ic" style="left:1948.00px;top:88.50px;width:22px;height:20px" viewBox="0 0 22 20"><path d="M1.5 1.5H20.5L13 10V18.5L9 15V10Z" fill="none" stroke="#5a5a5a" stroke-width="1.8" stroke-linejoin="round"/></svg>
<div class="t" style="left:1823.80px;top:149.08px;font-size:24px;color:#111111;transform:scale(1.0042,1.0000);transform-origin:0 0;">Repair</div>
<div class="t" style="left:2023.80px;top:22.88px;font-size:24px;color:#5f5f5f;font-weight:bold;transform:scale(1.0424,1.0000);transform-origin:0 0;">Created...</div>
<div class="b" style="left:1997.5px;top:18px;width:1.6px;height:31px;background:#babec1"></div><div class="b" style="left:1997.5px;top:83px;width:1.6px;height:31px;background:#babec1"></div><div class="b" style="left:2023px;top:81px;width:96px;height:36px;border:2px solid #879797;background:#f2f2f2"></div><svg class="ic" style="left:2148.00px;top:88.50px;width:22px;height:20px" viewBox="0 0 22 20"><path d="M1.5 1.5H20.5L13 10V18.5L9 15V10Z" fill="none" stroke="#5a5a5a" stroke-width="1.8" stroke-linejoin="round"/></svg>
<div class="t" style="left:2023.80px;top:149.08px;font-size:24px;color:#111111;transform:scale(0.9886,1.0000);transform-origin:0 0;">reza@wave...</div>
<div class="t" style="left:2023.80px;top:205.08px;font-size:24px;color:#111111;transform:scale(0.9952,1.0000);transform-origin:0 0;">shadman@...</div>
<div class="t" style="left:2023.80px;top:261.08px;font-size:24px;color:#111111;transform:scale(0.9952,1.0000);transform-origin:0 0;">shadman@...</div>
<div class="t" style="left:2023.80px;top:317.08px;font-size:24px;color:#111111;transform:scale(0.9952,1.0000);transform-origin:0 0;">shadman@...</div>
<div class="t" style="left:2223.80px;top:22.88px;font-size:24px;color:#5f5f5f;font-weight:bold;transform:scale(1.0350,1.0000);transform-origin:0 0;">Update...</div>
<div class="b" style="left:2197.5px;top:18px;width:1.6px;height:31px;background:#babec1"></div><div class="b" style="left:2197.5px;top:83px;width:1.6px;height:31px;background:#babec1"></div><div class="b" style="left:2223px;top:81px;width:96px;height:36px;border:2px solid #879797;background:#f2f2f2"></div><svg class="ic" style="left:2348.00px;top:88.50px;width:22px;height:20px" viewBox="0 0 22 20"><path d="M1.5 1.5H20.5L13 10V18.5L9 15V10Z" fill="none" stroke="#5a5a5a" stroke-width="1.8" stroke-linejoin="round"/></svg>
<div class="t" style="left:2223.80px;top:149.08px;font-size:24px;color:#111111;transform:scale(0.9886,1.0000);transform-origin:0 0;">reza@wave...</div>
<div class="t" style="left:2223.80px;top:205.08px;font-size:24px;color:#111111;transform:scale(0.9886,1.0000);transform-origin:0 0;">reza@wave...</div>
<div class="t" style="left:2223.80px;top:261.08px;font-size:24px;color:#111111;transform:scale(0.9886,1.0000);transform-origin:0 0;">reza@wave...</div>
<div class="t" style="left:2223.80px;top:317.08px;font-size:24px;color:#111111;transform:scale(0.9886,1.0000);transform-origin:0 0;">reza@wave...</div>
</div>
<div class="t" style="left:525.10px;top:552.48px;font-size:24px;color:#6e6e6e;transform:scale(0.9592,1.0000);transform-origin:0 0;">dd</div>
<svg class="ic" style="left:556px;top:555px;width:12px;height:20px" viewBox="0 0 12 20"><path d="M10.5 0.5 L1.5 19.5" stroke="#6e6e6e" stroke-width="1.9"/></svg>
<div class="b" style="left:572.2px;top:560px;width:1.9px;height:12.8px;background:#6e6e6e"></div>
<svg class="ic" style="left:580px;top:554px;width:20px;height:21px" viewBox="0 0 20 21"><rect x="1.3" y="3" width="17.4" height="16.6" rx="2.2" fill="none" stroke="#000" stroke-width="2"/><rect x="1.3" y="3" width="17.4" height="4.5" rx="1.5" fill="#000"/><rect x="3.5" y="0" width="2.2" height="3.5" rx="1" fill="#000"/><rect x="14.8" y="0" width="2.2" height="3.5" rx="1" fill="#000"/></svg>
<div class="b" style="left:489px;top:1536px;width:2362px;height:30px;background:#e9e9eb;border-top:2px solid #d6d6d8"></div>
<div class="b" style="left:494px;top:1544px;width:1848px;height:16px;border-radius:8px;background:#b5b5b7"></div>
<div class="b" style="left:2851px;top:468px;width:41px;height:1098px;background:#f2f2f2;border-left:2px solid #aab2b8"></div>
<div class="b" style="left:2853px;top:500px;width:39px;height:2px;background:#b4bac0"></div>
<div class="b" style="left:2853px;top:672px;width:39px;height:3px;background:#a8aeb6"></div>
<div class="b" style="left:2853px;top:815px;width:39px;height:2px;background:#b4bac0"></div>
<svg class="ic" style="left:2861px;top:524.7px;width:22px;height:18.3px" viewBox="0 0 22 18.3"><rect x="0.8" y="0" width="2.1" height="18.3" fill="#111"/><rect x="7" y="0" width="2.1" height="18.3" fill="#111"/><rect x="13" y="0" width="2.1" height="18.3" fill="#111"/><rect x="19" y="0" width="2.1" height="18.3" fill="#111"/></svg>
<div class="t" style="left:2859px;top:555.5px;font-size:25px;color:#111;writing-mode:vertical-rl;">Columns</div>
<svg class="ic" style="left:2860px;top:695px;width:24px;height:22px" viewBox="0 0 24 22"><path d="M2 2 H21.7 L14 13.6 V17.5 L9.3 20.3 V14 Z" fill="none" stroke="#111" stroke-width="2.3" stroke-linejoin="miter"/></svg>
<div class="t" style="left:2859px;top:728px;font-size:25px;color:#111;writing-mode:vertical-rl;">Filters</div>
<div style="position:absolute;left:0;top:0;width:2940px;height:128px;overflow:hidden;pointer-events:none;z-index:50"><div style="position:absolute;left:0;top:0;width:2940px;height:400px;box-shadow:inset 0 0 86px 28px rgb(37,92,234)"></div></div>
<div style="position:absolute;left:0;top:128px;width:2940px;height:1544px;overflow:hidden;pointer-events:none;z-index:50"><div style="position:absolute;left:0;top:-400px;width:2940px;height:1944px;box-shadow:inset 0 0 86px 28px rgb(58,106,236)"></div></div>
</body></html>
